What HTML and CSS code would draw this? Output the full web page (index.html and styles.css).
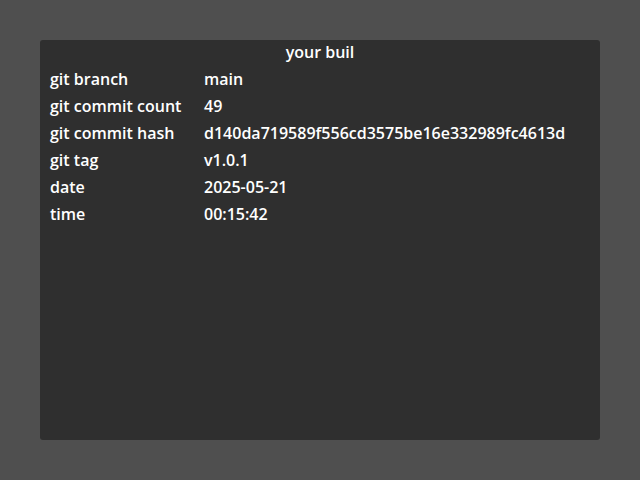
FILE: index.html
```html
<!DOCTYPE html>
<html>
<head>
<meta charset="utf-8">
<link rel="stylesheet" href="styles.css">
</head>
<body>
<div class="panel">
  <div class="title">your buil</div>
  <div class="table">
    <div class="label">git branch</div><div class="value">main</div>
    <div class="label">git commit count</div><div class="value">49</div>
    <div class="label">git commit hash</div><div class="value">d140da719589f556cd3575be16e332989fc4613d</div>
    <div class="label">git tag</div><div class="value">v1.0.1</div>
    <div class="label">date</div><div class="value">2025-05-21</div>
    <div class="label">time</div><div class="value">00:15:42</div>
  </div>
</div>
</body>
</html>
```
FILE: styles.css
```css
html, body {
  margin: 0;
  padding: 0;
  background: #4f4f4f;
  width: 640px;
  height: 480px;
  overflow: hidden;
}
body {
  padding: 40px;
  box-sizing: border-box;
  font-family: "Open Sans", "Noto Sans", sans-serif;
  font-size: 16px;
  font-weight: 600;
  color: #ffffff;
}
.panel {
  width: 560px;
  height: 400px;
  background: #2f2f2f;
  border-radius: 3px;
  box-sizing: border-box;
  padding: 0 10px;
}
.title {
  text-align: center;
  height: 24px;
  line-height: 24px;
}
.table {
  display: grid;
  grid-template-columns: 154px 1fr;
  grid-auto-rows: 27px;
  align-items: center;
  margin-top: 1px;
}
```
